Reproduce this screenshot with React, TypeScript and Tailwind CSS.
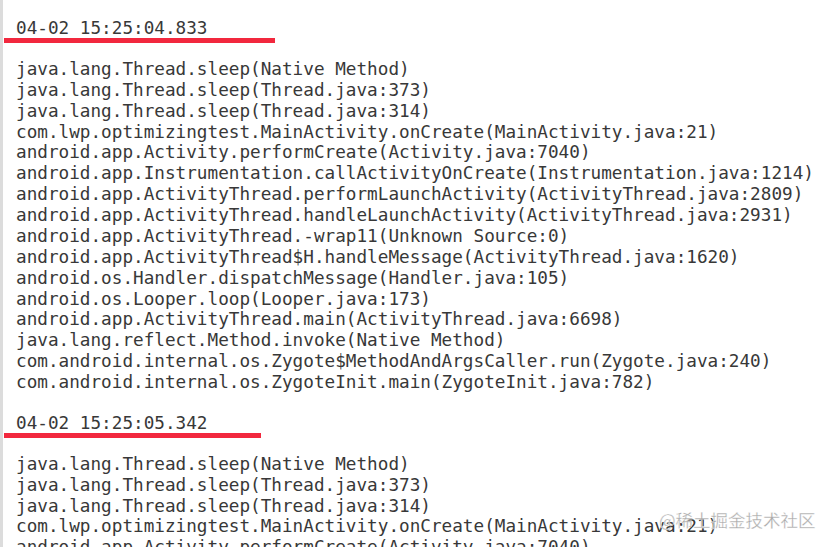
const blockOne = [
  "java.lang.Thread.sleep(Native Method)",
  "java.lang.Thread.sleep(Thread.java:373)",
  "java.lang.Thread.sleep(Thread.java:314)",
  "com.lwp.optimizingtest.MainActivity.onCreate(MainActivity.java:21)",
  "android.app.Activity.performCreate(Activity.java:7040)",
  "android.app.Instrumentation.callActivityOnCreate(Instrumentation.java:1214)",
  "android.app.ActivityThread.performLaunchActivity(ActivityThread.java:2809)",
  "android.app.ActivityThread.handleLaunchActivity(ActivityThread.java:2931)",
  "android.app.ActivityThread.-wrap11(Unknown Source:0)",
  "android.app.ActivityThread$H.handleMessage(ActivityThread.java:1620)",
  "android.os.Handler.dispatchMessage(Handler.java:105)",
  "android.os.Looper.loop(Looper.java:173)",
  "android.app.ActivityThread.main(ActivityThread.java:6698)",
  "java.lang.reflect.Method.invoke(Native Method)",
  "com.android.internal.os.Zygote$MethodAndArgsCaller.run(Zygote.java:240)",
  "com.android.internal.os.ZygoteInit.main(ZygoteInit.java:782)",
];

const blockTwo = blockOne.slice(0, 5);

function Trace({ time, bar, lines }: { time: string; bar: string; lines: string[] }) {
  return (
    <section>
      <div className="pl-[16px]">{time}</div>
      <div className={`ml-[4px] -mt-[1px] h-[5px] bg-[#f2283e] ${bar}`}></div>
      <div className="pl-[16px] pt-[16px] whitespace-pre">
        {lines.map((l) => (
          <div key={l}>{l}</div>
        ))}
      </div>
    </section>
  );
}

export default function App() {
  return (
    <div className="relative w-[829px] h-[547px] overflow-hidden bg-white border-l-[3px] border-[#dcdcdc]">
      <div
        className="-ml-[3px] pt-[18px] flex flex-col gap-[20px] text-[17.68px] leading-[20.87px] text-[#383838]"
        style={{ fontFamily: '"DejaVu Sans Mono", monospace' }}
      >
        <Trace time="04-02 15:25:04.833" bar="w-[271px]" lines={blockOne} />
        <Trace time="04-02 15:25:05.342" bar="w-[257px]" lines={blockTwo} />
      </div>
      <div
        className="absolute left-[656px] top-[509px] text-[17.5px] leading-[22px] text-[#a9a9a9]"
        style={{ fontFamily: '"Noto Sans CJK SC", sans-serif', WebkitTextStroke: "0.3px #ffffff" }}
      >
        @稀土掘金技术社区
      </div>
    </div>
  );
}
